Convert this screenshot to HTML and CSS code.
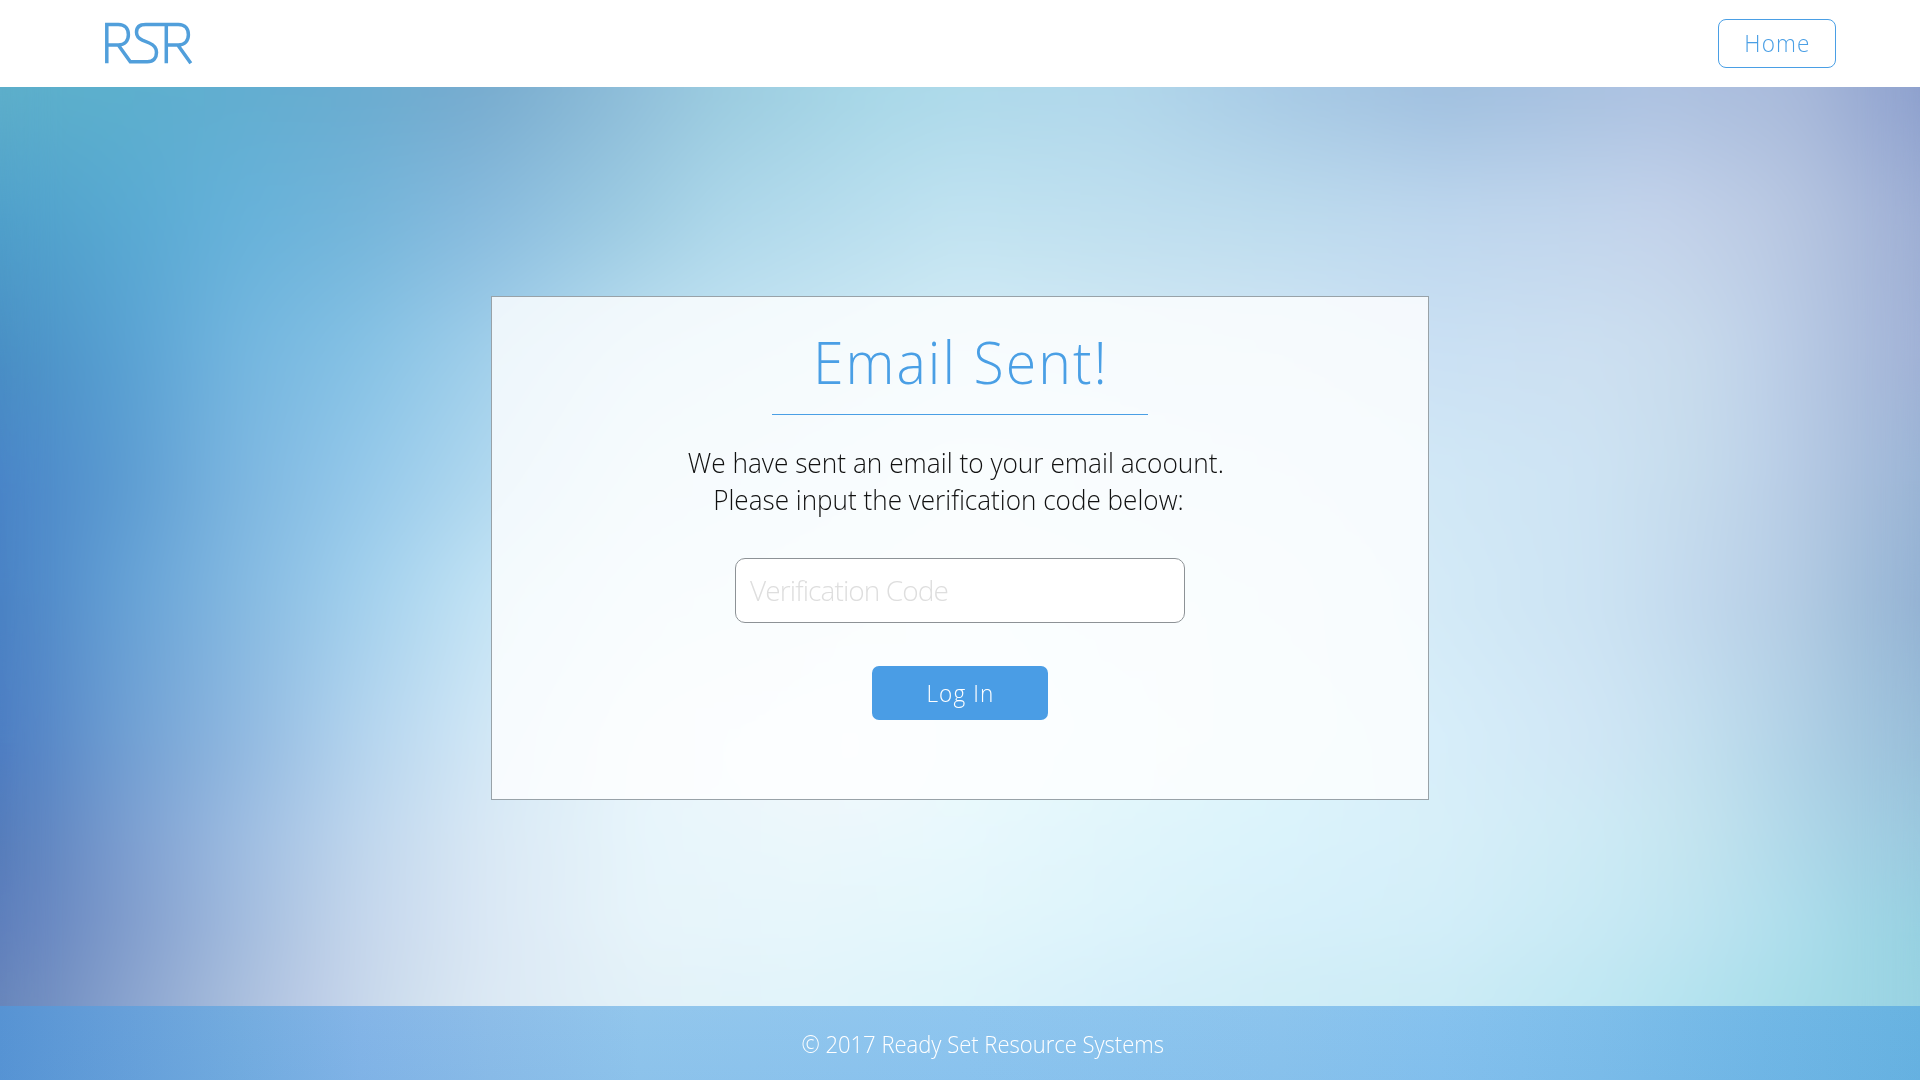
FILE: index.html
```html
<!DOCTYPE html>
<html lang="en">
<head>
<meta charset="utf-8">
<title>Email Sent - RSR</title>
<link rel="stylesheet" href="styles.css">
</head>
<body>
<div class="page">
  <div class="backdrop" aria-hidden="true">
    <div class="band band-1"></div>
    <div class="band band-2"></div>
    <div class="band band-3"></div>
    <div class="band band-4"></div>
    <div class="band band-5"></div>
    <div class="band band-6"></div>
    <div class="band band-7"></div>
    <div class="band band-8"></div>
    <div class="band band-9"></div>
  </div>
  <div class="layout">
    <header class="header">
      <svg class="logo" width="90" height="44" viewBox="104.200 22 90 44" role="img" aria-label="RSR">
        <path d="M107 63.3V24.6H118.5C125.5 24.6 128.6 29 128.6 34.8S125 45 118.5 45H107M118.5 45L130.5 61.7H147.500C154 61.700 156.700 57.500 156.700 52.500C156.700 48 154 44.800 149.500 43L142.500 40.200C139 38.600 136.700 36 136.700 32.300C136.700 27 140.500 24.600 146 24.600H178.500C185.500 24.600 188.600 29 188.600 34.800S185 45 178.500 45H166.500M166.500 24.600V63.300M178 45L191 63.300"/>
      </svg>
      <a class="home" href="#"><span class="label">Home</span></a>
    </header>
    <main class="main">
      <section class="card">
        <h1 class="title"><span class="heading">Email Sent!</span></h1>
        <p class="message"><span class="line line-1">We have sent an email to your email acoount.</span><span class="line line-2">Please input the verification code below:</span></p>
        <input class="code" type="text" placeholder="Verification Code">
        <button class="login" type="button"><span class="label">Log In</span></button>
      </section>
    </main>
    <footer class="footer"><span class="copyright">© 2017 Ready Set Resource Systems</span></footer>
  </div>
</div>
</body>
</html>
```
FILE: styles.css
```css
* { box-sizing: border-box; }
body {
  margin: 0;
  font-family: "Open Sans", "Noto Sans", sans-serif;
  font-weight: 300;
}
.page { display: grid; width: 1920px; height: 1080px; overflow: hidden; }
.backdrop, .layout { grid-area: 1 / 1; min-width: 0; }
.backdrop { display: grid; }

/* Each band is a horizontal colour run that fades in over the one before it. */
.band {
  grid-area: 1 / 1;
  -webkit-mask-image: linear-gradient(to bottom, transparent var(--from), #000 var(--to));
  mask-image: linear-gradient(to bottom, transparent var(--from), #000 var(--to));
}
.band-1 { --from: -1px; --to: 0px; background: linear-gradient(90deg, #5eafca 0, #5cb0cd 100px, #62aed0 240px, #6aacd0 360px, #77abce 480px, #83b4d3 560px, #90bfda 640px, #9acbdf 720px, #a8d8e8 880px, #add9ea 960px, #b1d7eb 1120px, #a7cae5 1280px, #9fbfdf 1440px, #adc2e1 1660px, #a8b9da 1800px, #8c9fcd 1920px); }
.band-2 { --from: 87px; --to: 219px; background: linear-gradient(90deg, #4f9fca 0, #58a9d2 120px, #66b2da 240px, #74b5da 360px, #88bbde 480px, #9fcde3 640px, #add7ea 720px, #c1e3f1 960px, #bfdfef 1120px, #bddcee 1280px, #bed7ee 1440px, #c2d5ec 1600px, #c4d3eb 1660px, #bccbe4 1760px, #afbfdd 1840px, #9cadd3 1920px); }
.band-3 { --from: 219px; --to: 358px; background: linear-gradient(90deg, #488dc3 0, #58a0d2 120px, #74b6df 240px, #86c2e5 360px, #a2d0eb 490px, #bfe1f2 640px, #d5edf6 960px, #d2e6f5 1280px, #cbe1f4 1430px, #cde0f1 1600px, #c8dbec 1700px, #bfd1e9 1760px, #b0c2df 1840px, #9fb0d5 1920px); }
.band-4 { --from: 358px; --to: 480px; background: linear-gradient(90deg, #4883c7 0, #5b9bd1 120px, #7cb6e0 240px, #94c8ea 360px, #b0d8ef 490px, #cfe8f5 640px, #e0f3f8 960px, #d8ecf8 1280px, #d1e8f6 1440px, #cde3f3 1600px, #c5dbec 1700px, #bdd2e9 1760px, #aec3df 1840px, #98b3d4 1920px); }
.band-5 { --from: 480px; --to: 596px; background: linear-gradient(90deg, #4880c3 0, #64a0d5 120px, #84b9e1 240px, #a2d0ed 360px, #c4e4f5 490px, #daeff8 640px, #e6f8fb 960px, #dff0fa 1280px, #d3eaf7 1440px, #cce3f3 1600px, #c2d8ed 1700px, #b3cbe3 1800px, #a7c3dd 1840px, #92b0d2 1920px); }
.band-6 { --from: 596px; --to: 743px; background: linear-gradient(90deg, #4b7bc1 0, #6f9ed2 120px, #90b8e0 240px, #b4d4ee 360px, #d3e8f6 490px, #e8f4fa 640px, #f4f8fc 860px, #eafafb 960px, #def4fa 1280px, #d7eefa 1440px, #d0e6f5 1600px, #c3e0ef 1700px, #b0d1e6 1800px, #97bdd8 1920px); }
.band-7 { --from: 743px; --to: 841px; background: linear-gradient(90deg, #537ab9 0, #7a9ccf 120px, #9dbce1 240px, #bfd6ed 360px, #dae9f5 490px, #e7f5fb 640px, #ebf7fb 800px, #e8f8fd 960px, #e0f5fb 1120px, #daf3fb 1280px, #d7eff9 1440px, #cdebf5 1600px, #c3e4ef 1700px, #afd8e9 1800px, #99c8de 1920px); }
.band-8 { --from: 841px; --to: 933px; background: linear-gradient(90deg, #5d7dbb 0, #7f9bcb 120px, #a2bbde 240px, #b4c9e4 300px, #c5d6ec 360px, #dbe8f5 490px, #e7f4fa 640px, #e6f6fb 800px, #e2f6fb 960px, #d6f0fa 1280px, #d2eef9 1440px, #c7e9f4 1600px, #bde4f1 1700px, #addeec 1800px, #95d0e0 1920px); }
.band-9 { --from: 933px; --to: 1006px; background: linear-gradient(90deg, #6684b9 0, #88a2ce 120px, #aabfdd 240px, #bfcee8 320px, #cedeed 400px, #dce9f4 490px, #e2f1f8 640px, #e1f3fa 800px, #dcf3fa 960px, #d5effa 1120px, #d0edf6 1280px, #cbebf5 1440px, #bee7f2 1600px, #b2e2ee 1700px, #a5dce8 1800px, #97d1e1 1920px); }

/* The blur melts the seams between bands. */
.layout {
  z-index: 1;
  display: flex;
  flex-direction: column;
  -webkit-backdrop-filter: blur(26px);
  backdrop-filter: blur(26px);
}
.header {
  height: 87px;
  padding: 0 84px 0 104px;
  background: #fff;
  display: flex;
  align-items: center;
  justify-content: space-between;
}
.logo path { fill: none; stroke: #519fdb; stroke-width: 3.5; }
.home {
  width: 118px;
  height: 49px;
  padding-bottom: 2px;
  border: 1px solid #4a9fe5;
  border-radius: 8px;
  display: flex;
  align-items: center;
  justify-content: center;
  font-size: 24px;
  color: #4a9fe5;
  text-decoration: none;
}
/* Slightly condensed lettering. */
.label, .heading, .line, .copyright { display: inline-block; transform: scaleX(.938); }
.label { letter-spacing: 1.2px; text-indent: 1.2px; }
.main { flex: 1; display: flex; justify-content: center; align-items: flex-start; padding-top: 209px; }
.card {
  width: 938px;
  height: 504px;
  border: 1px solid #98a2a8;
  background: rgba(255, 255, 255, .81);
  background-clip: padding-box;
  display: flex;
  flex-direction: column;
  align-items: center;
}
.title {
  margin: 0;
  width: 376px;
  height: 118px;
  padding-top: 24px;
  border-bottom: 1px solid #4a9fe5;
  font-size: 59px;
  line-height: 80px;
  font-weight: 300;
  color: #4a9fe5;
  text-align: center;
  white-space: nowrap;
}
.heading { letter-spacing: 2.2px; text-indent: 2.2px; }
.message {
  margin: 29px 0 0;
  display: flex;
  flex-direction: column;
  align-items: center;
  font-size: 28px;
  line-height: 37px;
  color: #111;
  white-space: nowrap;
}
.line-1 { margin-right: 8px; }
.line-2 { margin-right: 24px; transform: scaleX(.932); }
.code {
  width: 450px;
  height: 65px;
  margin: 40px 0 0;
  padding: 0 14px 2px;
  border: 1px solid #8d9296;
  border-radius: 10px;
  background: #fff;
  font: 300 28px "Open Sans", "Noto Sans", sans-serif;
  letter-spacing: -.9px;
  color: #111;
}
.code::placeholder { color: #dedede; opacity: 1; }
.login {
  width: 176px;
  height: 54px;
  margin: 43px 0 0;
  padding: 0 0 2px;
  border: 0;
  border-radius: 7px;
  background: #4a9de5;
  color: #fff;
  font: 300 24px "Open Sans", "Noto Sans", sans-serif;
}
.footer {
  height: 74px;
  display: flex;
  align-items: center;
  justify-content: center;
  padding: 1px 0 0 46px;
  font-size: 24px;
  color: #fff;
  background: linear-gradient(rgba(70, 150, 220, 0), rgba(70, 150, 220, .08)), linear-gradient(90deg, #5793d3 0, #669fd9 120px, #74acdf 240px, #84b5e7 360px, #8dbde8 490px, #92c6ec 640px, #8fc6ef 960px, #8cc4ed 1280px, #86c2ee 1440px, #7ebeea 1600px, #72b8e6 1760px, #68b3e1 1920px);
}
.copyright { transform: scaleX(.917); }
```
